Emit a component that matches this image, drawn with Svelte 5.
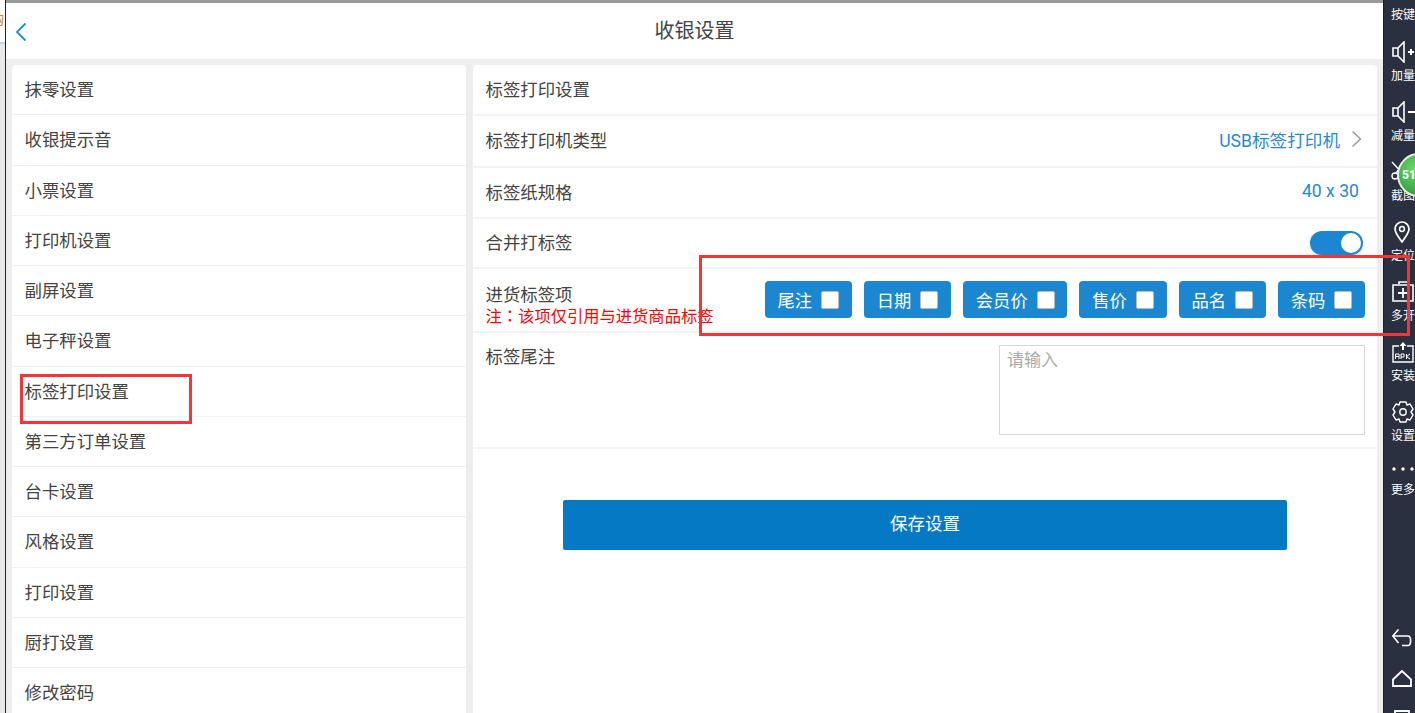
<script>
  const menu = ['抹零设置','收银提示音','小票设置','打印机设置','副屏设置','电子秤设置','标签打印设置','第三方订单设置','台卡设置','风格设置','打印设置','厨打设置','修改密码'];
  const tags = ['尾注','日期','会员价','售价','品名','条码'];
</script>

<div class="page">
  <div class="strip">
    <span class="junk">购</span>
  </div>
  <div class="app">
    <div class="topline"></div>
    <header class="head">
      <svg class="back" width="12" height="20" viewBox="0 0 12 20"><path d="M10.500 1.500 2 10l8.500 8.500" fill="none" stroke="#1f8ad6" stroke-width="1.800"/></svg>
      <h1>收银设置</h1>
    </header>
    <div class="body">
      <nav class="left">
        {#each menu as m}
          <div class="mi">{m}</div>
        {/each}
      </nav>
      <section class="right">
        <div class="row r1"><span>标签打印设置</span></div>
        <div class="row r2">
          <span>标签打印机类型</span>
          <span class="val">USB标签打印机
            <svg class="chev" width="11" height="18" viewBox="0 0 11 18"><path d="M1.500 1.500 9.500 9l-8 7.500" fill="none" stroke="#999" stroke-width="1.500"/></svg>
          </span>
        </div>
        <div class="row r3"><span>标签纸规格</span><span class="val size">40 x 30</span></div>
        <div class="row r3">
          <span>合并打标签</span>
          <span class="switch"><i></i></span>
        </div>
        <div class="row r4">
          <div class="stack">
            <span>进货标签项</span>
            <span class="note">注<span class="colon">：</span>该项仅引用与进货商品标签</span>
          </div>
          <div class="tags">
            {#each tags as t}
              <div class="tag">{t}<i class="box"></i></div>
            {/each}
          </div>
        </div>
        <div class="row r5">
          <span class="lab">标签尾注</span>
          <div class="ta">请输入</div>
        </div>
        <div class="save-wrap"><button class="save">保存设置</button></div>
      </section>
    </div>
  </div>
  <aside class="side">
    <div class="si first"><span>按键</span></div>
    <div class="si">
      <svg width="24" height="22" viewBox="0 0 24 22"><path d="M2 7h5l6-6v20l-6-6H2zM7 7v8" fill="none" stroke="#fff" stroke-width="1.600"/><path d="M17 11h6M20 8v6" stroke="#fff" stroke-width="2"/></svg>
      <span>加量</span>
    </div>
    <div class="si">
      <svg width="24" height="22" viewBox="0 0 24 22"><path d="M2 7h5l6-6v20l-6-6H2zM7 7v8" fill="none" stroke="#fff" stroke-width="1.600"/><path d="M17 11h7" stroke="#fff" stroke-width="2"/></svg>
      <span>减量</span>
    </div>
    <div class="si">
      <svg width="24" height="22" viewBox="0 0 24 22"><path d="M1 1l13 14M14 1 5 12" fill="none" stroke="#fff" stroke-width="1.400"/><circle cx="4" cy="15" r="3" fill="none" stroke="#fff" stroke-width="1.400"/></svg>
      <span>截图</span>
    </div>
    <div class="si">
      <svg width="24" height="22" viewBox="0 0 24 22"><path d="M11 21C7 15 4 12 4 8a7 7 0 0 1 14 0c0 4-3 7-7 13z" fill="none" stroke="#fff" stroke-width="1.700"/><circle cx="11" cy="8" r="2.400" fill="none" stroke="#fff" stroke-width="1.500"/></svg>
      <span>定位</span>
    </div>
    <div class="si">
      <svg width="24" height="22" viewBox="0 0 24 22"><path d="M8 3V1h9v2M2 4h20v16H2z" fill="none" stroke="#fff" stroke-width="1.600"/><path d="M7 12h10M12 7v10" stroke="#fff" stroke-width="1.800"/></svg>
      <span>多开</span>
    </div>
    <div class="si">
      <svg width="24" height="22" viewBox="0 0 24 22"><path d="M8 5H2v16h20V5h-6" fill="none" stroke="#fff" stroke-width="1.400"/><path d="M12 1l-3.500 4H11v4h2V5h2.500z" fill="#fff"/><path d="M4.500 18v-5h3.500v5M4.500 15.500h3.500M10 18v-5h3v3h-3M15.500 13v5M19 13l-3.500 2.500L19 18" fill="none" stroke="#fff" stroke-width="1"/></svg>
      <span>安装</span>
    </div>
    <div class="si">
      <svg width="24" height="22" viewBox="0 0 24 22"><path d="M9 1h6l1 3 3-1 3 5-2 3 2 3-3 5-3-1-1 3H9l-1-3-3 1-3-5 2-3-2-3 3-5 3 1z" fill="none" stroke="#fff" stroke-width="1.400" stroke-linejoin="round"/><circle cx="12" cy="11" r="3.200" fill="none" stroke="#fff" stroke-width="1.400"/></svg>
      <span>设置</span>
    </div>
    <div class="si more">
      <svg width="24" height="6" viewBox="0 0 24 6"><circle cx="3" cy="3" r="1.700" fill="#fff"/><circle cx="12" cy="3" r="1.700" fill="#fff"/><circle cx="21" cy="3" r="1.700" fill="#fff"/></svg>
      <span>更多</span>
    </div>
    <div class="nav">
      <svg width="20" height="18" viewBox="0 0 20 18"><path d="M6.500 .5 .8 7l5.700 7M.8 7H16c3.500 0 3.500 9.500 0 9.500h-6" fill="none" stroke="#fff" stroke-width="1.600"/></svg>
      <svg width="20" height="17" viewBox="0 0 20 17"><path d="M10 1 1 9.500V16h18V9.500z" fill="none" stroke="#fff" stroke-width="1.800"/></svg>
      <svg width="20" height="18" viewBox="0 0 20 18"><path d="M3 1h14v16H3z" fill="none" stroke="#fff" stroke-width="1.800"/></svg>
    </div>
  </aside>

  <div class="badge">51</div>
  <div class="mark m1"></div>
  <div class="mark m2"></div>
</div>

<style>
  :global(body) { margin: 0; background: #fff; }
  .page {
    position: relative;
    display: flex;
    width: 1415px;
    height: 713px;
    overflow: hidden;
    font-family: "Roboto", "Noto Sans CJK SC", sans-serif;
    color: #444;
  }
  .strip {
    width: 5px;
    background: linear-gradient(#fff 0, #fff 42px, #c6d3e0 42px, #c6d3e0 44px, #e9e9e9 44px);
    border-right: 1px solid #222;
    overflow: hidden;
    flex: none;
  }
  .junk { display: block; margin: 12px 0 0 -9px; font-size: 13px; line-height: 16px; color: #c8853c; }
  .app { flex: 1; display: flex; flex-direction: column; min-width: 0; background: #eee; }
  .topline { height: 3px; background: #999; flex: none; }
  .head {
    height: 56px;
    flex: none;
    background: #fff;
    display: flex;
    align-items: center;
    justify-content: center;
    position: relative;
  }
  .back { position: absolute; left: 9px; top: 19px; }
  h1 { margin: 0 0 3px; font-size: 20px; font-weight: 400; color: #444; }
  .body { flex: 1; display: flex; gap: 7px; padding: 6px 6px 0 6px; min-height: 0; }
  .left {
    width: 454px;
    flex: none;
    background: #fff;
    border-radius: 4px 4px 0 0;
  }
  .mi {
    box-sizing: border-box;
    height: 50.250px;
    line-height: 51px;
    padding-left: 12.500px;
    font-size: 17.400px;
    border-bottom: 1px solid #f0f0f0;
    color: #444;
  }
  .right { flex: 1; background: #fff; border-radius: 4px 4px 0 0; min-width: 0; }
  .row {
    box-sizing: border-box;
    display: flex;
    align-items: center;
    justify-content: space-between;
    padding: 0 12px 0 12.500px;
    font-size: 17.400px;
    border-bottom: 2px solid #f3f3f3;
  }
  .r1 { height: 51px; padding-bottom: 2px; }
  .r2 { height: 52px; padding-bottom: 3px; }
  .r3 { height: 50.500px; padding-bottom: 2px; }
  .r4 { height: 63.500px; }
  .r5 { height: 116.500px; align-items: flex-start; }
  .val { color: #1f8ad6; display: flex; align-items: center; gap: 11px; font-size: 17.600px; margin-right: 3px; }
  .chev { position: relative; top: -1px; }
  .size { margin-right: 6px; }
  .switch {
    width: 53px;
    height: 24px;
    margin-right: 2px;
    border-radius: 12px;
    background: #1b87d0;
    position: relative;
    top: 1px;
    box-shadow: 0 2px 3px rgba(0,0,0,.12);
  }
  .switch i {
    position: absolute;
    right: 2px;
    top: 2px;
    width: 20px;
    height: 20px;
    border-radius: 50%;
    background: #fff;
  }
  .stack { display: flex; flex-direction: column; line-height: 21px; margin-top: 11px; }
  .note { font-size: 16.300px; color: #f00; line-height: 18px; white-space: nowrap; }
  .colon { font-family: "Noto Sans CJK TC", sans-serif; }
  .tags { display: flex; gap: 12px; }
  .tag {
    box-sizing: border-box;
    height: 37px;
    padding: 0 12.800px;
    display: flex;
    align-items: center;
    gap: 9px;
    background: #1b87d0;
    border-radius: 4px;
    color: #fff;
    font-size: 17.300px;
  }
  .box {
    width: 18px;
    height: 18px;
    box-sizing: border-box;
    background: #fff;
    border: 1px solid #bbb;
    border-radius: 2px;
  }
  .lab { margin-top: 12px; line-height: 24px; }
  .ta {
    box-sizing: border-box;
    width: 366px;
    height: 90px;
    margin-top: 12.500px;
    border: 1px solid #d8d8d8;
    padding: 2px 7px;
    font-size: 17px;
    line-height: 24px;
    color: #aaa;
  }
  .save-wrap { padding: 51px 90px 0; }
  .save {
    display: block;
    box-sizing: border-box;
    width: 724px;
    height: 49.500px;
    padding: 0 0 4px;
    background: #0579c4;
    color: #fff;
    border: 0;
    border-radius: 2px;
    font: inherit;
    font-size: 17.500px;
  }
  .side {
    flex: none;
    background: #2a3040;
    border-left: 1px solid #1b1f2a;
    box-sizing: border-box;
    width: 32px;
    display: flex;
    flex-direction: column;
    color: #fff;
    font-size: 12px;
    padding-left: 7px;
    overflow: hidden;
  }
  .si {
    height: 60px;
    flex: none;
    display: flex;
    flex-direction: column;
    justify-content: flex-end;
    gap: 5px;
    white-space: nowrap;
    line-height: 16px;
    width: 26px;
  }
  .si:nth-child(2) { height: 61px; }
  .si.first { height: 23px; }
  .si.more { height: 54px; gap: 10px; }
  .si svg { display: block; flex: none; }
  .nav { margin-top: auto; display: flex; flex-direction: column; gap: 23px; margin-bottom: -15px; padding-left: 1px; }
  .nav svg { display: block; flex: none; }
  .badge {
    position: absolute;
    left: 1397px;
    top: 153px;
    width: 44px;
    height: 44px;
    box-sizing: border-box;
    padding-left: 3px;
    border-radius: 50%;
    border: 2px solid #e8efe4;
    background: radial-gradient(circle at 40% 35%, #6fd96f, #2f9e3c 75%);
    color: #fff;
    font: 700 12px/40px "Roboto", sans-serif;
  }
  .mark { position: absolute; box-sizing: border-box; border: 3px solid #f5343a; }
  .m1 { left: 20px; top: 374px; width: 172px; height: 50px; }
  .m2 { left: 699px; top: 255px; width: 711px; height: 81px; }
</style>
